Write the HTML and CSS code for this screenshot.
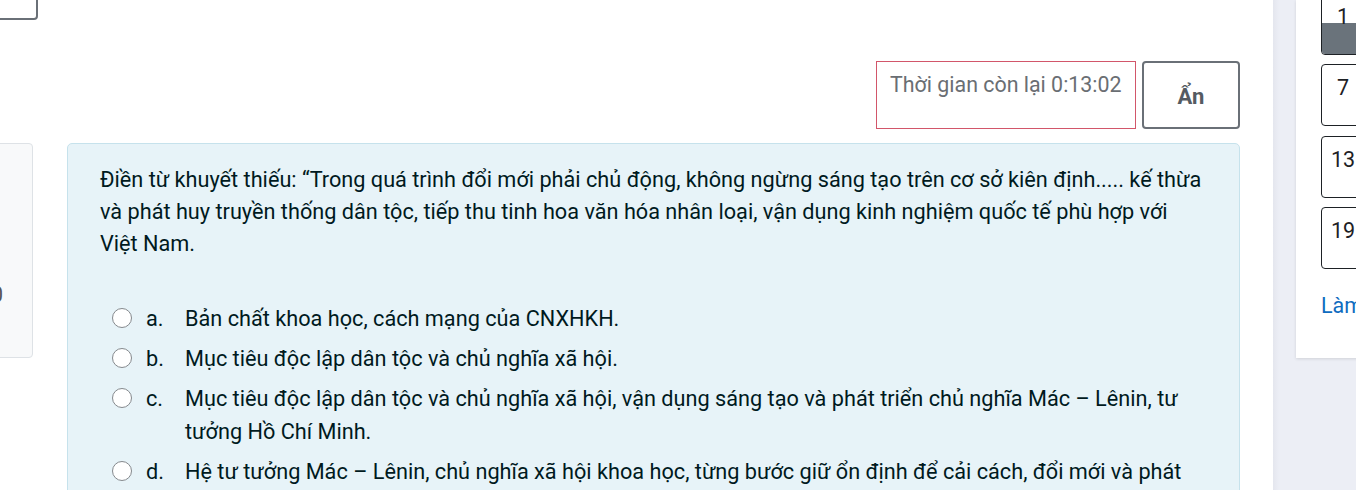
FILE: index.html
```html
<!DOCTYPE html>
<html lang="vi">
<head>
<meta charset="utf-8">
<link rel="stylesheet" href="styles.css">
</head>
<body>
<div class="page">
  <div class="main">
    <div class="top-btn"></div>
    <div class="timer-row">
      <div class="timer">Thời gian còn lại 0:13:02</div>
      <button class="hide-btn">Ẩn</button>
    </div>
    <div class="content-row">
      <div class="info"><span>Đạt điểm 1,00</span></div>
      <div class="card">
        <div class="qtext">Điền từ khuyết thiếu: “Trong quá trình đổi mới phải chủ động, không ngừng sáng tạo trên cơ sở kiên định..... kế thừa và phát huy truyền thống dân tộc, tiếp thu tinh hoa văn hóa nhân loại, vận dụng kinh nghiệm quốc tế phù hợp với Việt Nam.</div>
        <div class="answers">
          <div class="opt"><span class="radio"></span><span class="letter">a.</span><span class="otext">Bản chất khoa học, cách mạng của CNXHKH.</span></div>
          <div class="opt"><span class="radio"></span><span class="letter">b.</span><span class="otext">Mục tiêu độc lập dân tộc và chủ nghĩa xã hội.</span></div>
          <div class="opt"><span class="radio"></span><span class="letter">c.</span><span class="otext">Mục tiêu độc lập dân tộc và chủ nghĩa xã hội, vận dụng sáng tạo và phát triển chủ nghĩa Mác – Lênin, tư tưởng Hồ Chí Minh.</span></div>
          <div class="opt"><span class="radio"></span><span class="letter">d.</span><span class="otext">Hệ tư tưởng Mác – Lênin, chủ nghĩa xã hội khoa học, từng bước giữ ổn định để cải cách, đổi mới và phát triển.</span></div>
        </div>
      </div>
    </div>
  </div>
  <div class="side">
    <div class="panel">
      <div class="qnlist">
        <div class="qn current"><span>1</span><i class="fill"></i></div>
        <div class="qn"><span>7</span></div>
        <div class="qn"><span>13</span></div>
        <div class="qn"><span>19</span></div>
      </div>
      <a class="finish">Làm xong...</a>
    </div>
  </div>
</div>
</body>
</html>
```
FILE: styles.css
```css
* { box-sizing: border-box; }
html, body { margin: 0; padding: 0; }
body {
  width: 1356px;
  height: 490px;
  overflow: hidden;
  font-family: Roboto, "Noto Sans", sans-serif;
  color: #1d2125;
  background: #fff;
}
.page {
  display: flex;
  height: 490px;
}
.main {
  width: 1273px;
  flex: none;
  background: #fff;
}
.top-btn {
  width: 58px;
  height: 40px;
  margin-left: -20px;
  margin-top: -20px;
  border: 2px solid #6a7077;
  border-radius: 4px;
}
.timer-row {
  display: flex;
  justify-content: flex-end;
  gap: 6px;
  margin-top: 41px;
  padding-right: 33px;
}
.timer {
  width: 260px;
  height: 68px;
  border: 1px solid #d2566a;
  padding: 10px 13px;
  font-size: 21.4px;
  line-height: 26px;
  color: #6a6e73;
  white-space: nowrap;
}
.hide-btn {
  width: 98px;
  height: 68px;
  border: 2px solid #6a7077;
  border-radius: 4px;
  background: #fff;
  font-family: Roboto, "Noto Sans", sans-serif;
  font-size: 22px;
  font-weight: 700;
  color: #555b62;
  padding: 2px 0 0 0;
}
.content-row {
  display: flex;
  margin-top: 14px;
}
.info {
  display: flex;
  justify-content: flex-end;
  align-items: flex-start;
  width: 250px;
  height: 215px;
  margin-left: -217px;
  flex: none;
  background: #f8f9fa;
  border: 1px solid #dee2e6;
  border-radius: 4px;
  padding: 136px 29px 0 0;
  font-size: 21.5px;
  line-height: 30px;
  color: #555;
  white-space: nowrap;
  overflow: hidden;
}
.card {
  width: 1173px;
  margin-left: 34px;
  height: 400px;
  flex: none;
  background: #e7f3f8;
  border: 1px solid #c6e2ec;
  border-radius: 5px;
  padding: 20px 33px 0 32px;
  color: #001a1e;
}
.qtext {
  font-size: 21.7px;
  line-height: 32px;
}
.answers {
  margin-top: 38px;
  padding-left: 12px;
}
.opt {
  display: flex;
  align-items: flex-start;
  padding: 3.5px 0;
  font-size: 21.7px;
  line-height: 33px;
}
.radio {
  width: 20px;
  height: 20px;
  margin-top: 6px;
  border: 1.5px solid #85898d;
  border-radius: 50%;
  background: #fff;
  flex: none;
}
.letter {
  width: 39px;
  margin-left: 14px;
  flex: none;
}
.otext {
  flex: 1;
  padding-right: 20px;
}
.side {
  flex: 1;
  background: linear-gradient(to right, #e4e6ee 0px, #eceef5 6px, #eceef5 100%);
  padding-left: 23px;
}
.panel {
  height: 358px;
  background: #fff;
  box-shadow: 0 1px 3px rgba(0,0,0,0.12);
  padding-left: 25px;
  overflow: hidden;
}
.qnlist {
  display: flex;
  flex-direction: column;
  gap: 9.5px;
  margin-top: -7.5px;
}
.qn {
  position: relative;
  width: 44px;
  height: 62px;
  border: 1px solid #1d2125;
  border-radius: 4px;
  text-align: center;
  padding-top: 8px;
  font-size: 21.5px;
  line-height: 30px;
  color: #1d2125;
  overflow: hidden;
}
.qn span { position: relative; z-index: 1; }
.qn .fill {
  position: absolute;
  left: 0;
  right: 0;
  bottom: 0;
  height: 31px;
  background: #6a737b;
}
.finish {
  display: block;
  margin-top: 22px;
  font-size: 21.5px;
  line-height: 30px;
  color: #0f6cbf;
  white-space: nowrap;
}
```
